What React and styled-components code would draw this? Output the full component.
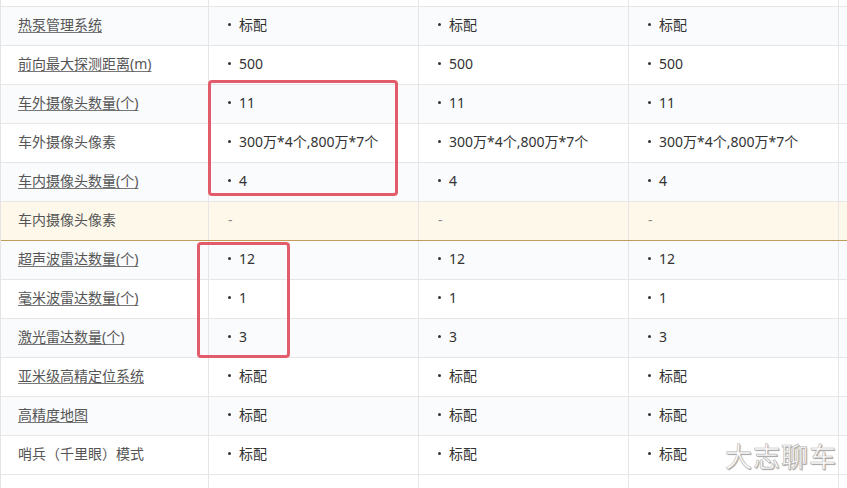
import React from "react";
import styled, { createGlobalStyle } from "styled-components";

const Global = createGlobalStyle`
  html, body { margin: 0; padding: 0; background: #ffffff; }
  body { font-family: "Noto Sans", "Noto Sans CJK SC", sans-serif; }
`;

const Page = styled.div`
  position: relative;
  width: 847px;
  height: 488px;
  overflow: hidden;
  background: #ffffff;
`;

const Table = styled.div`
  display: flex;
  flex-direction: column;
  border-left: 1px solid #e4e4e4;
`;

const Row = styled.div`
  display: grid;
  grid-template-columns: 208px 210px 210px 210px 1fr;
  height: ${(p) => p.$h || 39}px;
  box-sizing: border-box;
  border-bottom: ${(p) => (p.$gold ? "1px solid #bf9c5a" : "1px solid #e6e6e6")};
  background: ${(p) => (p.$gold ? "#fdf8ea" : p.$alt ? "#fafbfd" : "#ffffff")};
`;

const Cell = styled.div`
  display: flex;
  align-items: center;
  box-sizing: border-box;
  border-right: ${(p) => (p.$last ? "none" : "1px solid #e6e6e6")};
  padding-left: ${(p) => (p.$label ? 17 : 19)}px;
  padding-bottom: 4px;
  font-family: "Noto Sans", "Noto Sans CJK SC", sans-serif;
  font-size: 14px;
  white-space: nowrap;
  color: #333;
`;

const Label = styled.span`
  color: #555;
  text-decoration: ${(p) => (p.$link ? "underline" : "none")};
  text-underline-offset: 2px;
  text-decoration-color: #777;
`;

const Value = styled.span`
  display: inline-flex;
  align-items: center;
  color: #333;
  &::before {
    content: "";
    width: 3px;
    height: 3px;
    border-radius: 50%;
    background: #333;
    margin-right: 8px;
  }
`;

const Dash = styled.span`
  color: #8c8c8c;
`;

const Highlight = styled.div`
  position: absolute;
  left: ${(p) => p.$x}px;
  top: ${(p) => p.$y}px;
  width: ${(p) => p.$w}px;
  height: ${(p) => p.$h}px;
  box-sizing: border-box;
  border: 3px solid #e35c6b;
  border-radius: 4px;
  pointer-events: none;
`;

const Watermark = styled.div`
  position: absolute;
  left: 725px;
  top: 436px;
  font-size: 27px;
  letter-spacing: 1px;
  color: #ffffff;
  font-family: "Noto Sans CJK SC", sans-serif;
  -webkit-text-stroke: 0.6px #b5b5b5;
  text-shadow: 1px 1px 1px #a0a0a0;
`;

const rows = [
  { label: "热泵管理系统", link: true, value: "标配" },
  { label: "前向最大探测距离(m)", link: true, value: "500" },
  { label: "车外摄像头数量(个)", link: true, value: "11" },
  { label: "车外摄像头像素", link: false, value: "300万*4个,800万*7个" },
  { label: "车内摄像头数量(个)", link: true, value: "4" },
  { label: "车内摄像头像素", link: false, value: null, gold: true },
  { label: "超声波雷达数量(个)", link: true, value: "12" },
  { label: "毫米波雷达数量(个)", link: true, value: "1" },
  { label: "激光雷达数量(个)", link: true, value: "3" },
  { label: "亚米级高精定位系统", link: true, value: "标配" },
  { label: "高精度地图", link: true, value: "标配" },
  { label: "哨兵（千里眼）模式", link: false, value: "标配" },
];

export default function App() {
  return (
    <Page>
      <Global />
      <Table>
        <Row $h={7}>
          <Cell $label />
          <Cell />
          <Cell />
          <Cell />
          <Cell $last />
        </Row>
        {rows.map((r, i) => (
          <Row key={r.label} $alt={i % 2 === 0} $gold={r.gold}>
            <Cell $label>
              <Label $link={r.link}>{r.label}</Label>
            </Cell>
            {[0, 1, 2].map((c) => (
              <Cell key={c}>
                {r.value ? <Value>{r.value}</Value> : <Dash>-</Dash>}
              </Cell>
            ))}
            <Cell $last />
          </Row>
        ))}
        <Row $h={20}>
          <Cell $label />
          <Cell />
          <Cell />
          <Cell />
          <Cell $last />
        </Row>
      </Table>
      <Highlight $x={208} $y={80} $w={190} $h={116} />
      <Highlight $x={197} $y={242} $w={93} $h={116} />
      <Watermark>大志聊车</Watermark>
    </Page>
  );
}
